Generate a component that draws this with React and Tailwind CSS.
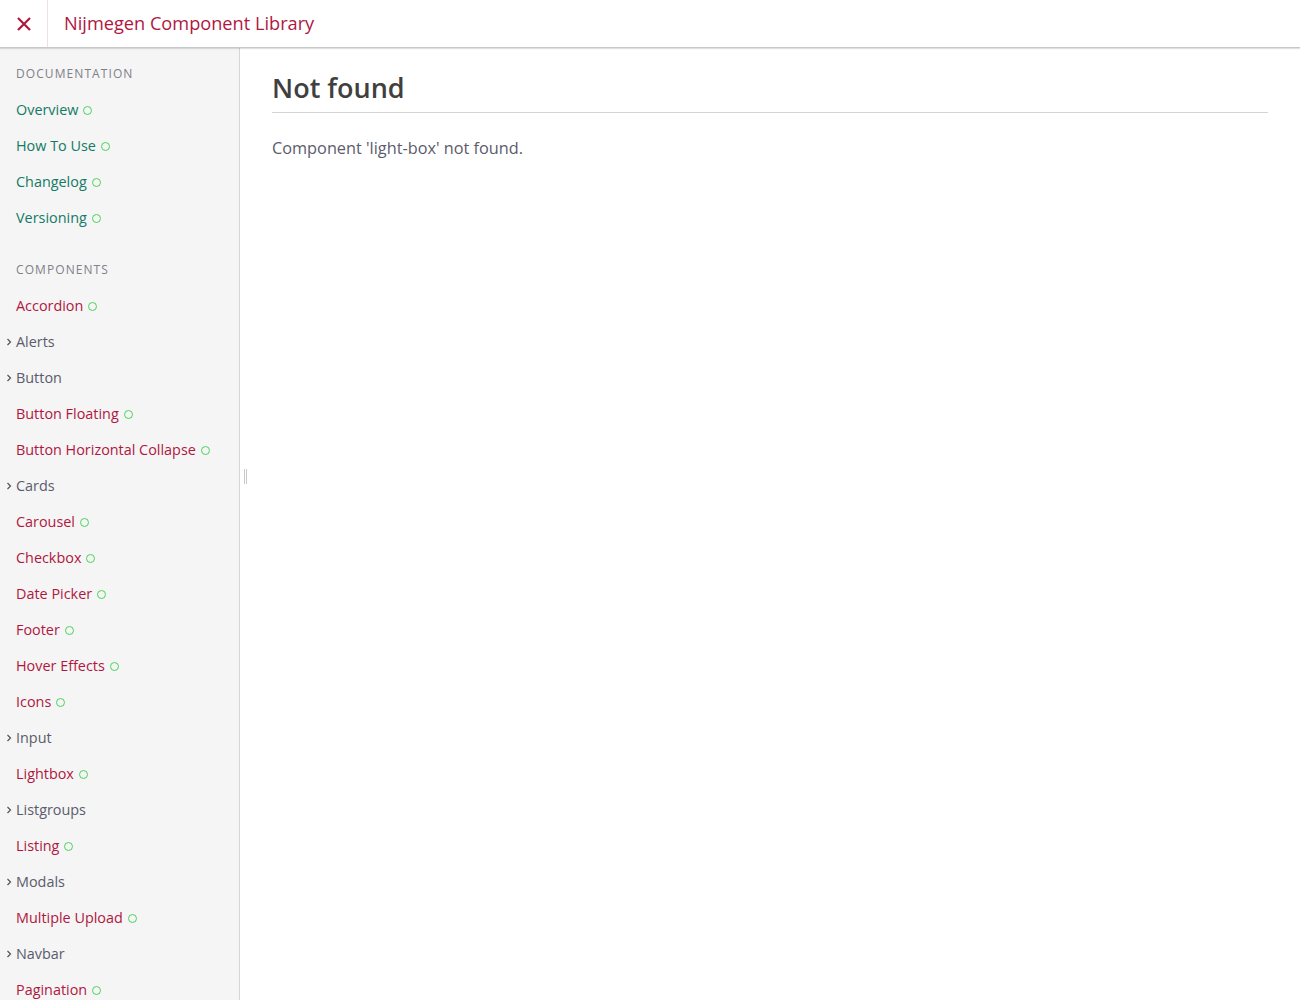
import React from "react";

const docs = ["Overview", "How To Use", "Changelog", "Versioning"];

const components = [
  { label: "Accordion", ready: true },
  { label: "Alerts", group: true },
  { label: "Button", group: true },
  { label: "Button Floating", ready: true },
  { label: "Button Horizontal Collapse", ready: true },
  { label: "Cards", group: true },
  { label: "Carousel", ready: true },
  { label: "Checkbox", ready: true },
  { label: "Date Picker", ready: true },
  { label: "Footer", ready: true },
  { label: "Hover Effects", ready: true },
  { label: "Icons", ready: true },
  { label: "Input", group: true },
  { label: "Lightbox", ready: true },
  { label: "Listgroups", group: true },
  { label: "Listing", ready: true },
  { label: "Modals", group: true },
  { label: "Multiple Upload", ready: true },
  { label: "Navbar", group: true },
  { label: "Pagination", ready: true },
  { label: "Progress Bar", ready: true },
];

const Status = () => (
  <span className="ml-[5px] inline-block h-[9px] w-[9px] rounded-full border-[1.6px] border-[#48d458]" />
);

const Chevron = () => (
  <svg className="absolute left-[6px] top-[14px]" width="6" height="8" viewBox="0 0 6 8" fill="none">
    <path d="M1.5 1 L4.5 4 L1.5 7" stroke="#555" strokeWidth="1.2" />
  </svg>
);

const NavItem = ({ label, color, ready, group }) => (
  <li className="relative flex h-[36px] items-center pl-4">
    {group && <Chevron />}
    <span className={color}>{label}</span>
    {ready && <Status />}
  </li>
);

export default function App() {
  return (
    <div className="flex h-screen flex-col overflow-hidden bg-white text-[14.4px] text-[#5b5b6b]" style={{ fontFamily: "'Open Sans', sans-serif" }}>
      <header className="relative z-10 flex h-[48px] shrink-0 items-center border-b border-[#c8c8c8] bg-white shadow-[0_1px_1px_rgba(0,0,0,0.12)]">
        <button className="flex h-full w-[48px] items-center justify-center border-r border-[#f3dde3] text-[#b0173f]">
          <svg width="14" height="14" viewBox="0 0 14 14">
            <path d="M1 1 L13 13 M13 1 L1 13" stroke="currentColor" strokeWidth="2.2" />
          </svg>
        </button>
        <h1 className="pl-4 text-[18.2px] text-[#b0173f]">Nijmegen Component Library</h1>
      </header>

      <div className="relative flex min-h-0 flex-1">
        <aside className="w-[240px] shrink-0 overflow-hidden border-r border-[#d6d6d6] bg-[#f5f5f5]">
          <div className="pt-[17px]">
            <h2 className="pl-4 text-[12px] uppercase tracking-[0.09em] text-[#808089]">Documentation</h2>
            <ul className="mt-[9px]">
              {docs.map((d) => (
                <NavItem key={d} label={d} color="text-[#137a66]" ready />
              ))}
            </ul>
            <h2 className="mt-[25px] pl-4 text-[12px] uppercase tracking-[0.09em] text-[#808089]">Components</h2>
            <ul className="mt-[9px]">
              {components.map((c) => (
                <NavItem
                  key={c.label}
                  label={c.label}
                  ready={c.ready}
                  group={c.group}
                  color={c.group ? "text-[#5b5b6b]" : "text-[#b0173f]"}
                />
              ))}
            </ul>
          </div>
        </aside>

        <div className="absolute left-[244px] top-[421px] flex gap-[1px]">
          <span className="h-[15px] w-[1px] bg-[#c8c8c8]" />
          <span className="h-[15px] w-[1px] bg-[#c8c8c8]" />
        </div>

        <main className="flex-1 px-8 pt-[20px]">
          <h1 className="border-b border-[#d4d4d8] pb-[3px] text-[27px] font-semibold text-[#404040]">Not found</h1>
          <p className="mt-[23px] text-[16.3px] text-[#5b5b6b]">Component 'light-box' not found.</p>
        </main>
      </div>
    </div>
  );
}
